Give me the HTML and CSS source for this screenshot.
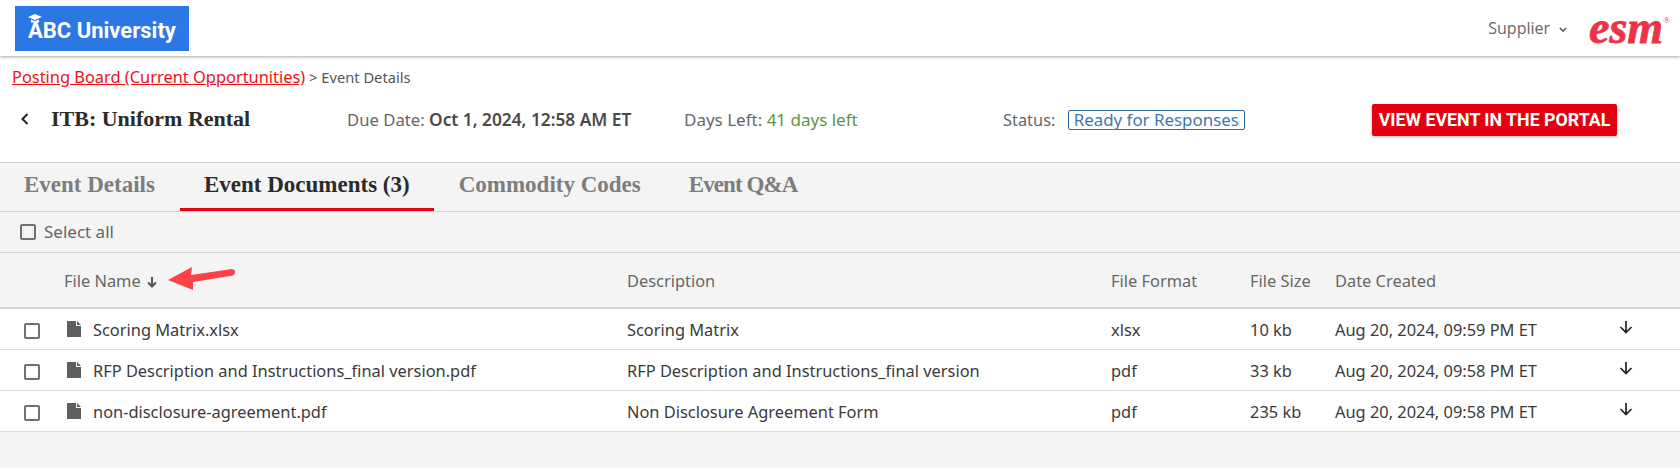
FILE: index.html
```html
<!DOCTYPE html>
<html lang="en">
<head>
  <meta charset="UTF-8" />
  <title>Event Details</title>
  <link rel="stylesheet" href="styles.css">
</head>
<body>

<header class="topbar">
  <a class="logo" href="#">
    <svg class="logo-cap" viewBox="0 0 14 10" width="14" height="10"><path d="M7 0 14 3 7 6 0 3Z" fill="#fff"/><path d="M3 5.5 7 7.2 11 5.5V8.5H3Z" fill="#fff"/></svg>
    <span>ABC University</span>
  </a>
  <div class="topbar-right">
    <span class="role">Supplier</span>
    <svg class="role-caret" viewBox="0 0 10 6" width="8" height="5"><path d="M1 1 5 5 9 1" fill="none" stroke="#555" stroke-width="1.8"/></svg>
    <span class="esm">esm<sup>®</sup></span>
  </div>
</header>

<section class="event-head">
  <p class="crumbs"><a href="#">Posting Board (Current Opportunities)</a> &gt; Event Details</p>
  <div class="event-row">
    <svg class="back" viewBox="0 0 8 12" width="8" height="12"><path d="M6.5 1 1.5 6 6.5 11" fill="none" stroke="#222" stroke-width="2"/></svg>
    <h1>ITB: Uniform Rental</h1>
    <span class="due">Due Date: <b>Oct 1, 2024, 12:58 AM ET</b></span>
    <span class="left">Days Left: <em>41 days left</em></span>
    <span class="status">Status: <i>Ready for Responses</i></span>
    <a class="portal-btn" href="#">VIEW EVENT IN THE PORTAL</a>
  </div>
</section>

<nav class="tabs">
  <a href="#" class="tab-first">Event Details</a>
  <a href="#" class="active">Event Documents (3)</a>
  <a href="#" class="tab-codes">Commodity Codes</a>
  <a href="#" class="tab-qa">Event Q&amp;A</a>
</nav>

<div class="select-all"><span class="check"></span> <span class="select-label">Select all</span></div>

<div class="row head">
  <span></span>
  <span class="name-head">File Name
    <svg viewBox="0 0 12 12" width="12" height="12"><path d="M6 1V10M2 6.5 6 10.5 10 6.5" fill="none" stroke="#555" stroke-width="2"/></svg>
  </span>
  <span>Description</span>
  <span>File Format</span>
  <span>File Size</span>
  <span>Date Created</span>
  <span></span>
</div>

<div class="row">
  <span class="check"></span>
  <span class="name"><svg class="doc" viewBox="0 0 14 16" width="14" height="16"><path d="M0 0H9V5H14V16H0ZM10 0 14 4H10Z" fill="#5f5f5f"/></svg>Scoring Matrix.xlsx</span>
  <span>Scoring Matrix</span>
  <span>xlsx</span>
  <span>10 kb</span>
  <span>Aug 20, 2024, 09:59 PM ET</span>
  <svg class="dl" viewBox="0 0 14 14" width="14" height="14"><path d="M7 1V12.5M1.5 7 7 12.5 12.5 7" fill="none" stroke="#222" stroke-width="1.7"/></svg>
</div>
<div class="row">
  <span class="check"></span>
  <span class="name"><svg class="doc" viewBox="0 0 14 16" width="14" height="16"><path d="M0 0H9V5H14V16H0ZM10 0 14 4H10Z" fill="#5f5f5f"/></svg>RFP Description and Instructions_final version.pdf</span>
  <span>RFP Description and Instructions_final version</span>
  <span>pdf</span>
  <span>33 kb</span>
  <span>Aug 20, 2024, 09:58 PM ET</span>
  <svg class="dl" viewBox="0 0 14 14" width="14" height="14"><path d="M7 1V12.5M1.5 7 7 12.5 12.5 7" fill="none" stroke="#222" stroke-width="1.7"/></svg>
</div>
<div class="row">
  <span class="check"></span>
  <span class="name"><svg class="doc" viewBox="0 0 14 16" width="14" height="16"><path d="M0 0H9V5H14V16H0ZM10 0 14 4H10Z" fill="#5f5f5f"/></svg>non-disclosure-agreement.pdf</span>
  <span>Non Disclosure Agreement Form</span>
  <span>pdf</span>
  <span>235 kb</span>
  <span>Aug 20, 2024, 09:58 PM ET</span>
  <svg class="dl" viewBox="0 0 14 14" width="14" height="14"><path d="M7 1V12.5M1.5 7 7 12.5 12.5 7" fill="none" stroke="#222" stroke-width="1.7"/></svg>
</div>

<!-- red annotation arrow over the table header -->
<svg class="note-arrow" viewBox="0 0 70 26" width="70" height="26"><path d="M1 15 25 2 24 10 65 4Q69 5 68 8 67 11 63 11L26 17 26 25Z" fill="#fb4348"/></svg>

</body>
</html>
```

FILE: styles.css
```css
body {
  margin: 0;
  height: 468px;
  overflow: hidden;
  position: relative;
  font-family: "Noto Sans", sans-serif;
  font-size: 16.4px;
  color: #3a3a3a;
  background-color: #f4f4f4;
}
.topbar {
  height: 56px;
  background-color: #fff;
  box-shadow: 0 1px 3px rgba(0,0,0,0.35);
  display: flex;
  align-items: center;
  justify-content: space-between;
  padding: 0 10px 0 15px;
  position: relative;
}
.logo {
  position: relative;
  width: 174px;
  height: 45px;
  background-color: #2b77e4;
  color: #fff;
  font-family: "Roboto", sans-serif;
  font-weight: 700;
  font-size: 22px;
  text-decoration: none;
  display: flex;
  align-items: center;
  padding-left: 13px;
  box-sizing: border-box;
  margin-top: 1px;
}
.logo-cap {
  position: absolute;
  left: 13px;
  top: 8px;
}
.logo span {
  margin-top: 4px;
}
.topbar-right {
  display: flex;
  align-items: center;
}
.role {
  font-family: "Open Sans", sans-serif;
  font-size: 16px;
  color: #666;
}
.role-caret {
  margin: 3px 22px 0 9px;
}
.esm {
  font-family: "Liberation Serif", serif;
  font-weight: 700;
  font-style: italic;
  font-size: 46px;
  line-height: 30px;
  color: #ef3346;
  -webkit-text-stroke: 0.8px #ef3346;
}
.esm sup {
  font-size: 9px;
  font-style: normal;
  font-weight: 400;
  vertical-align: 20px;
  line-height: 0;
  -webkit-text-stroke: 0;
}
.event-head {
  height: 106px;
  background-color: #fff;
  border-bottom: 1px solid #d6d6d6;
}
.crumbs {
  margin: 0;
  padding: 12px 0 0 12px;
  font-size: 14.7px;
  line-height: 18px;
  color: #555;
}
.crumbs a {
  color: #f01018;
  font-size: 16.4px;
}
.event-row {
  display: flex;
  align-items: center;
  margin-top: 17px;
  padding-left: 21px;
  height: 32px;
}
.back {
  margin-right: 22px;
}
h1 {
  margin: 0;
  width: 296px;
  font-family: "Liberation Serif", serif;
  font-size: 22px;
  font-weight: 700;
  color: #2b2b2b;
}
.due {
  width: 337px;
  font-size: 16.7px;
  color: #666;
}
.due b {
  font-weight: 600;
  font-size: 17.3px;
  color: #4a4a4a;
}
.left {
  width: 319px;
  font-size: 17px;
  color: #666;
}
.left em {
  font-style: normal;
  color: #5d9440;
}
.status {
  width: 369px;
  color: #666;
}
.status i {
  font-style: normal;
  font-size: 16.9px;
  line-height: 18px;
  display: inline-block;
  color: #3f78ad;
  border: 1px solid #2f6da8;
  border-radius: 2px;
  padding: 0 5px;
  margin-left: 8px;
}
.portal-btn {
  background-color: #e3000f;
  color: #fff;
  font-family: "Roboto", sans-serif;
  font-weight: 700;
  font-size: 17.8px;
  text-decoration: none;
  width: 245px;
  height: 32px;
  line-height: 32px;
  margin-top: 2px;
  text-align: center;
  white-space: nowrap;
  border-radius: 2px;
  box-shadow: 0 1px 3px rgba(0,0,0,0.3);
}
.tabs {
  height: 48px;
  display: flex;
  border-bottom: 1px solid #d6d6d6;
}
.tabs a {
  font-family: "Liberation Serif", serif;
  font-weight: 700;
  font-size: 23px;
  color: #7d7d7d;
  text-decoration: none;
  padding: 9px 24px 0;
  box-sizing: border-box;
  height: 48px;
}
.tabs a.active {
  color: #2b2b2b;
  border-bottom: 3px solid #e3000f;
}
.tabs a.tab-first {
  padding-right: 25px;
}
.tabs a.tab-codes {
  padding-left: 25px;
}
.tabs a.tab-qa {
  letter-spacing: -0.9px;
}
.select-all {
  height: 40px;
  padding-left: 20px;
  display: flex;
  align-items: center;
  gap: 8px;
  font-size: 17px;
  color: #666;
  border-bottom: 1px solid #d6d6d6;
}
.select-label {
  margin-top: -2px;
}
.check {
  display: block;
  width: 12px;
  height: 12px;
  border: 2px solid #707070;
  border-radius: 2px;
  background-color: #fff;
}
.select-all .check {
  background: none;
}
.row {
  display: grid;
  grid-template-columns: 67px 560px 484px 139px 85px 284px 56px;
  align-items: center;
  height: 40px;
  background-color: #fff;
  border-bottom: 1px solid #dcdcdc;
}
.row > .check {
  margin: 3px 0 0 24px;
}
.row.head {
  height: 54px;
  background: none;
  color: #666;
  border-bottom: 2px solid #d6d6d6;
}
.name-head {
  margin-left: -3px;
}
.name-head svg {
  vertical-align: -1px;
  margin-left: 1px;
}
.name {
  display: flex;
  align-items: center;
}
.doc {
  margin-right: 12px;
}
.dl {
  margin-top: -4px;
}
.note-arrow {
  position: absolute;
  left: 167px;
  top: 265px;
}
```
